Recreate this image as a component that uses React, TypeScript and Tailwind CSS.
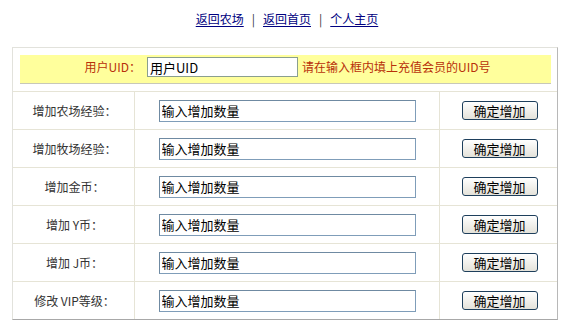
import React from "react";

const rows = [
  "增加农场经验：",
  "增加牧场经验：",
  "增加金币：",
  "增加 Y币：",
  "增加 J币：",
  "修改 VIP等级：",
];

const NavLinks = () => {
  return (
    <div className="h-[47px] pt-[12px] text-center text-[12px] leading-[14px] text-[#333]">
      <a href="#" className="text-[#000080] underline underline-offset-2">返回农场</a>
      <span className="mx-[8px]">|</span>
      <a href="#" className="text-[#000080] underline underline-offset-2">返回首页</a>
      <span className="mx-[8px]">|</span>
      <a href="#" className="text-[#000080] underline underline-offset-2">个人主页</a>
    </div>
  );
};

const UidRow = () => {
  return (
    <div className="pt-[7px] pb-[7px] pl-[7px] pr-[6px]">
      <div className="h-[29px] bg-[#ffff9c] border-b border-[#c8c8b8] flex justify-center items-start pt-[2px] pl-[4px] text-[12px] text-[#b8300a]">
        <span className="leading-[20px] mr-[6px]">用户UID：</span>
        <input
          defaultValue="用户UID"
          className="w-[151px] h-[20px] border border-[#8a9f8f] bg-white px-[2px] text-[13px] text-black outline-none leading-[18px]"
        />
        <span className="leading-[20px] ml-[4px]">请在输入框内填上充值会员的UID号</span>
      </div>
    </div>
  );
};

const FieldRow = ({ label }: { label: string }) => {
  return (
    <div className="grid grid-cols-[121px_305px_1fr] h-[38px] border-t border-[#e6e4d6]">
      <div className="flex items-center justify-center text-[12px] text-[#333] pl-[2px]">{label}</div>
      <div className="flex items-center justify-center border-l border-[#e6e4d6]">
        <input
          defaultValue="输入增加数量"
          className="w-[257px] h-[22px] border border-[#7f9db9] border-t-[#6f8aa2] border-l-[#6f8aa2] bg-white px-[2px] text-[13px] text-black outline-none"
        />
      </div>
      <div className="flex items-center justify-center border-l border-[#e6e4d6] pl-[2px]">
        <button className="w-[76px] h-[19px] rounded-[3px] border border-[#1e3f5c] bg-gradient-to-b from-white to-[#e4e2da] text-[13px] leading-[15px] text-black">
          确定增加
        </button>
      </div>
    </div>
  );
};

export default function App() {
  return (
    <div className="w-[574px] h-[331px] bg-white font-['Noto_Sans_CJK_SC',sans-serif]">
      <NavLinks />
      <div className="ml-[12px] w-[546px] border border-[#e2e2dc] border-b-[#a8a8a8] border-r-[#b8b8b8]">
        <UidRow />
        {rows.map((r) => (
          <FieldRow key={r} label={r} />
        ))}
      </div>
    </div>
  );
}
